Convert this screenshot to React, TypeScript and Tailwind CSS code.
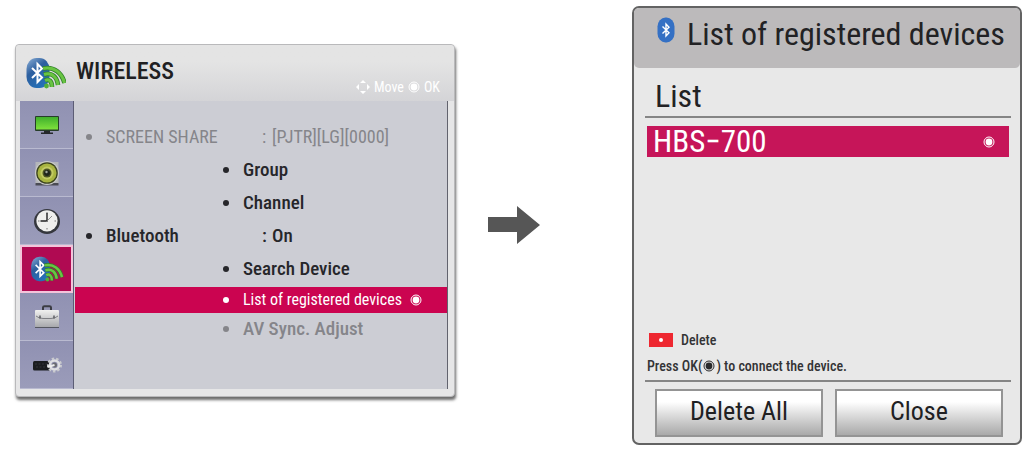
import type { ReactNode } from "react";

const FONT =
  "font-['Roboto_Condensed','Liberation_Sans_Narrow','DejaVu_Sans_Condensed',sans-serif]";

function OkDot({ className, color }: { className: string; color: string }) {
  return (
    <svg viewBox="0 0 12 12" className={className} aria-hidden="true">
      <circle cx="6" cy="6" r="5" fill="none" stroke={color} strokeWidth="1" />
      <circle cx="6" cy="6" r="3.4" fill={color} />
    </svg>
  );
}

function BluetoothMark({ className }: { className: string }) {
  return (
    <svg viewBox="0 0 18 26" className={className} aria-hidden="true">
      <rect x="0.5" y="0.5" width="17" height="25" rx="8" ry="9" fill="#3470c4" />
      <path d="M5.500 9.500 L12 15.800 L9 19 V7 L12 10.200 L5.500 16.500" fill="none" stroke="#fff" strokeWidth="1.4" />
    </svg>
  );
}

function WirelessIcon({ className }: { className: string }) {
  return (
    <svg viewBox="0 0 40 32" className={className} aria-hidden="true">
      <defs>
        <linearGradient id="bt-blue" x1="0" y1="0" x2="0.6" y2="1">
          <stop offset="0" stopColor="#8fb2d8" />
          <stop offset="0.45" stopColor="#2d5f9f" />
          <stop offset="1" stopColor="#2470b8" />
        </linearGradient>
      </defs>
      <rect x="0.500" y="1" width="23" height="30" rx="10" ry="11" fill="url(#bt-blue)" />
      <path d="M6 11 L16 20.500 L11.500 25 V7 L16 11.500 L6 21" fill="none" stroke="#fff" strokeWidth="2" />
      <g fill="none" stroke="#2f7f28" strokeWidth="4.600">
        <path d="M17 11.500 C28 9 36 16 38.500 26" />
        <path d="M18 17.500 C26 15 31 20 32 28" />
        <path d="M19 23.500 C23 21.500 26 24 26 30" />
      </g>
      <g fill="none" stroke="#69c443" strokeWidth="3">
        <path d="M17 11.500 C28 9 36 16 38.500 26" />
        <path d="M18 17.500 C26 15 31 20 32 28" />
        <path d="M19 23.500 C23 21.500 26 24 26 30" />
      </g>
      <circle cx="20.500" cy="29" r="2.400" fill="#52b038" />
    </svg>
  );
}

function MonitorIcon() {
  return (
    <svg viewBox="0 0 26 20" className="h-5 w-[26px]" aria-hidden="true">
      <defs>
        <linearGradient id="screen" x1="0" y1="0" x2="0" y2="1">
          <stop offset="0" stopColor="#3faf2c" />
          <stop offset="1" stopColor="#7fe23c" />
        </linearGradient>
      </defs>
      <rect x="1" y="1" width="24" height="15" rx="1" fill="#263d29" />
      <rect x="2" y="2" width="22" height="12.500" fill="url(#screen)" />
      <path d="M10 16h6v1.500h3V19H7v-1.500h3z" fill="#25282c" />
    </svg>
  );
}

function SpeakerIcon() {
  return (
    <svg viewBox="0 0 26 28" className="h-7 w-[26px]" aria-hidden="true">
      <rect x="1.500" y="3" width="23" height="22" fill="#b4b6ba" />
      <path d="M1.500 24h23v2.500h-23z" fill="#4a4b55" />
      <circle cx="13" cy="14" r="12" fill="#c9cacb" />
      <circle cx="13" cy="14" r="10.800" fill="#3b431d" />
      <circle cx="13" cy="14" r="9.500" fill="#a8b440" />
      <circle cx="13" cy="14" r="6.500" fill="#c3cb62" />
      <circle cx="13" cy="14" r="4.500" fill="#4b5222" />
      <circle cx="13" cy="14" r="3" fill="#20251c" />
      <circle cx="12.500" cy="13" r="1.200" fill="#9fa59a" />
    </svg>
  );
}

function ClockIcon() {
  return (
    <svg viewBox="0 0 28 28" className="size-7" aria-hidden="true">
      <ellipse cx="14" cy="14.500" rx="13" ry="12.500" fill="#35373d" />
      <circle cx="14" cy="13.800" r="10.600" fill="#efefed" />
      <path d="M14 5v1.500M14 21v1.500M5 14h1.500M21.500 14H23" stroke="#777" />
      <path d="M14 6v8H7.500" fill="none" stroke="#222" strokeWidth="1.400" />
      <path d="M13 15l6-6" stroke="#777" strokeWidth="0.800" />
    </svg>
  );
}

function CaseIcon() {
  return (
    <svg viewBox="0 0 26 24" className="h-6 w-[26px]" aria-hidden="true">
      <defs>
        <linearGradient id="case" x1="0" y1="0" x2="0" y2="1">
          <stop offset="0" stopColor="#f1f1f0" />
          <stop offset="1" stopColor="#a5a6aa" />
        </linearGradient>
      </defs>
      <path d="M9 5V2.500Q9 1.200 10.500 1.200h5Q17 1.200 17 2.500V5" fill="none" stroke="#3b3c43" strokeWidth="2" />
      <rect x="1" y="5" width="24" height="17.500" rx="1" fill="url(#case)" />
      <path d="M1 22.500h24" stroke="#555761" />
      <path d="M2 11q3 2.500 7 2.500h8q4 0 7-2.500" fill="none" stroke="#7e7f84" />
      <path d="M6 10.500v3M20 10.500v3" stroke="#55565c" strokeWidth="1.400" />
    </svg>
  );
}

function InputIcon() {
  return (
    <svg viewBox="0 0 30 18" className="h-[18px] w-[30px]" aria-hidden="true">
      <path d="M1 6.500q0-1.500 1.500-1.500H18v9.500H2.500Q1 14.500 1 13z" fill="#1b1d20" />
      <path d="M3 8h13M4 11h10" stroke="#35373b" strokeDasharray="2 1.500" />
      <circle cx="22.500" cy="9" r="6.500" fill="none" stroke="#c9cace" strokeWidth="2" strokeDasharray="2.500 2" />
      <circle cx="22.500" cy="9" r="4.500" fill="none" stroke="#dedfe2" strokeWidth="2.600" />
      <circle cx="22.500" cy="9" r="2.500" fill="#6a6c72" />
      <path d="M15.500 11l7-2" stroke="#eee" strokeWidth="2" />
    </svg>
  );
}

const tabs: { name: string; icon: ReactNode; active?: boolean }[] = [
  { name: "Picture", icon: <MonitorIcon /> },
  { name: "Audio", icon: <SpeakerIcon /> },
  { name: "Time", icon: <ClockIcon /> },
  { name: "Wireless", icon: <WirelessIcon className="h-[26px] w-[34px]" />, active: true },
  { name: "Option", icon: <CaseIcon /> },
  { name: "Input", icon: <InputIcon /> },
];

function Bullet({ className }: { className: string }) {
  return <span className={`size-1.5 shrink-0 rounded-full ${className}`} />;
}

function MainItem({ label, value, tone, dot }: { label: string; value: string; tone: string; dot: string }) {
  return (
    <li>
      <button className={`flex h-[33px] w-full items-center pl-[11px] text-left whitespace-nowrap ${tone}`}>
        <Bullet className={dot} />
        <span className="ml-3.5 w-[156px]">{label}</span>
        <span className="w-2.5">:</span>
        <span>{value}</span>
      </button>
    </li>
  );
}

function SubItem({ label }: { label: string }) {
  return (
    <li>
      <button className="flex h-[33px] w-full items-center pl-[148px] text-left text-[19px] font-medium text-[#26262a]">
        <Bullet className="bg-[#26262a]" />
        <span className="ml-3.5">{label}</span>
      </button>
    </li>
  );
}

function WirelessMenu() {
  return (
    <section className="rounded-[4px] border border-[#b9b9bb] bg-[#e6e6e7] px-1 pb-[7px] shadow-[1px_3px_3px_#6b6b6b]">
      <header className="-mx-1 flex h-14 items-center rounded-t-[4px] bg-linear-to-b from-[#e4e4e4] from-30% to-[#d4d4d7] pr-3.5 pl-2.5">
        <WirelessIcon className="h-8 w-10" />
        <h1 className="ml-2.5 pb-1 text-2xl leading-7 font-medium text-[#202022]">WIRELESS</h1>
        <p className="ml-auto flex items-center self-end pb-1 text-[14px] leading-5 text-white">
          <svg viewBox="0 0 14 14" className="mr-1 size-3.5" aria-hidden="true">
            <path d="M7 0l3 3H4zM7 14l3-3H4zM0 7l3-3v6zM14 7l-3-3v6z" fill="#fff" />
          </svg>
          Move
          <OkDot className="mx-1 size-3" color="#ffffff" />
          OK
        </p>
      </header>
      <div className="flex">
        <nav className="w-[54px] shrink-0 border-r border-[#5c5d75] bg-[#9495b5]">
          {tabs.map((tab) => (
            <button
              key={tab.name}
              aria-label={tab.name}
              className={
                tab.active
                  ? "flex h-12 w-full items-center justify-center border-2 border-[#f3c4da] bg-[#b00a52]"
                  : "flex h-12 w-full items-center justify-center border-b border-[#b9bad0] bg-linear-to-b from-[#9091b2] to-[#9b9cba]"
              }
            >
              {tab.icon}
            </button>
          ))}
        </nav>
        <ul className="mr-0.5 grow border-r border-[#62636e] bg-[#cccdd4] pt-[19px] pl-px leading-6">
          <MainItem
            label="SCREEN SHARE"
            value="[PJTR][LG][0000]"
            tone="text-lg text-[#85858a]"
            dot="bg-[#85858a]"
          />
          <SubItem label="Group" />
          <SubItem label="Channel" />
          <MainItem label="Bluetooth" value="On" tone="text-[19px] font-medium text-[#26262a]" dot="bg-[#26262a]" />
          <SubItem label="Search Device" />
          <li>
            <button className="mt-0.5 flex h-[26px] w-full items-center bg-[#cb0450] pl-[148px] text-left text-base whitespace-nowrap text-white">
              <Bullet className="bg-white" />
              <span className="ml-3.5">List of registered devices</span>
              <OkDot className="ml-2 size-3" color="#ffffff" />
            </button>
          </li>
          <li>
            <button className="flex h-8 w-full items-center pl-[148px] text-left text-[19px] font-medium text-[#85858a]">
              <Bullet className="bg-[#85858a]" />
              <span className="ml-3.5">AV Sync. Adjust</span>
            </button>
          </li>
        </ul>
      </div>
    </section>
  );
}

const dialogButton =
  "h-12 grow basis-0 border-2 border-[#949494] bg-linear-to-b from-white from-25% to-[#a9a9a9] pb-1 text-[26px] leading-8 text-[#202022]";

function DevicesDialog() {
  return (
    <section className="flex flex-col rounded-[7px] border-2 border-[#636363] bg-[#e8e8e8]">
      <header className="flex h-[60px] rounded-[5px] bg-[#bcbabb] pt-1.5 pl-[23px]">
        <BluetoothMark className="mt-[3px] h-[26px] w-[18px] shrink-0" />
        <h2 className="ml-3 text-[32px] leading-10 whitespace-nowrap text-[#222224]">List of registered devices</h2>
      </header>
      <div className="pr-[9px] pl-[11px]">
        <h3 className="mt-3 border-b-2 border-[#858585] pb-1 pl-2.5 text-[32px] leading-8 text-[#222224]">List</h3>
        <div className="px-0.5">
          <button className="mt-2 flex h-[31px] w-full items-center bg-[#c61559] pr-3.5 pl-1.5 text-left text-[31px] leading-8 text-white">
            HBS−700
            <OkDot className="ml-auto size-3" color="#ffffff" />
          </button>
          <div className="mt-[173px] flex items-center text-[14px] leading-5 font-medium text-[#333335]">
            <span className="mr-2 ml-0.5 flex h-3.5 w-6 items-center justify-center bg-[#ee2730]">
              <span className="size-1 rounded-full bg-white" />
            </span>
            Delete
          </div>
        </div>
        <p className="mt-1.5 flex items-center border-b-2 border-[#858585] pb-1 pl-0.5 text-[14px] leading-5 font-medium text-[#333335]">
          Press OK(
          <OkDot className="mx-px size-3" color="#29292b" />) to connect the device.
        </p>
        <div className="mt-[7px] mb-1.5 flex gap-3 pr-2 pl-2.5">
          <button className={dialogButton}>Delete All</button>
          <button className={dialogButton}>Close</button>
        </div>
      </div>
    </section>
  );
}

export default function App() {
  return (
    <main
      className={`grid grid-cols-[minmax(0,440fr)_minmax(0,177fr)_minmax(0,390fr)] items-start bg-white pt-1.5 pr-0.5 pb-1 pl-[15px] ${FONT}`}
    >
      <div className="pt-[38px]">
        <WirelessMenu />
      </div>
      <svg viewBox="0 0 52 38" className="mt-[200px] ml-[33px] h-[38px] w-[52px]" aria-hidden="true">
        <path d="M0 11h29V0l23 19-23 19V26H0z" fill="#565656" />
      </svg>
      <DevicesDialog />
    </main>
  );
}
